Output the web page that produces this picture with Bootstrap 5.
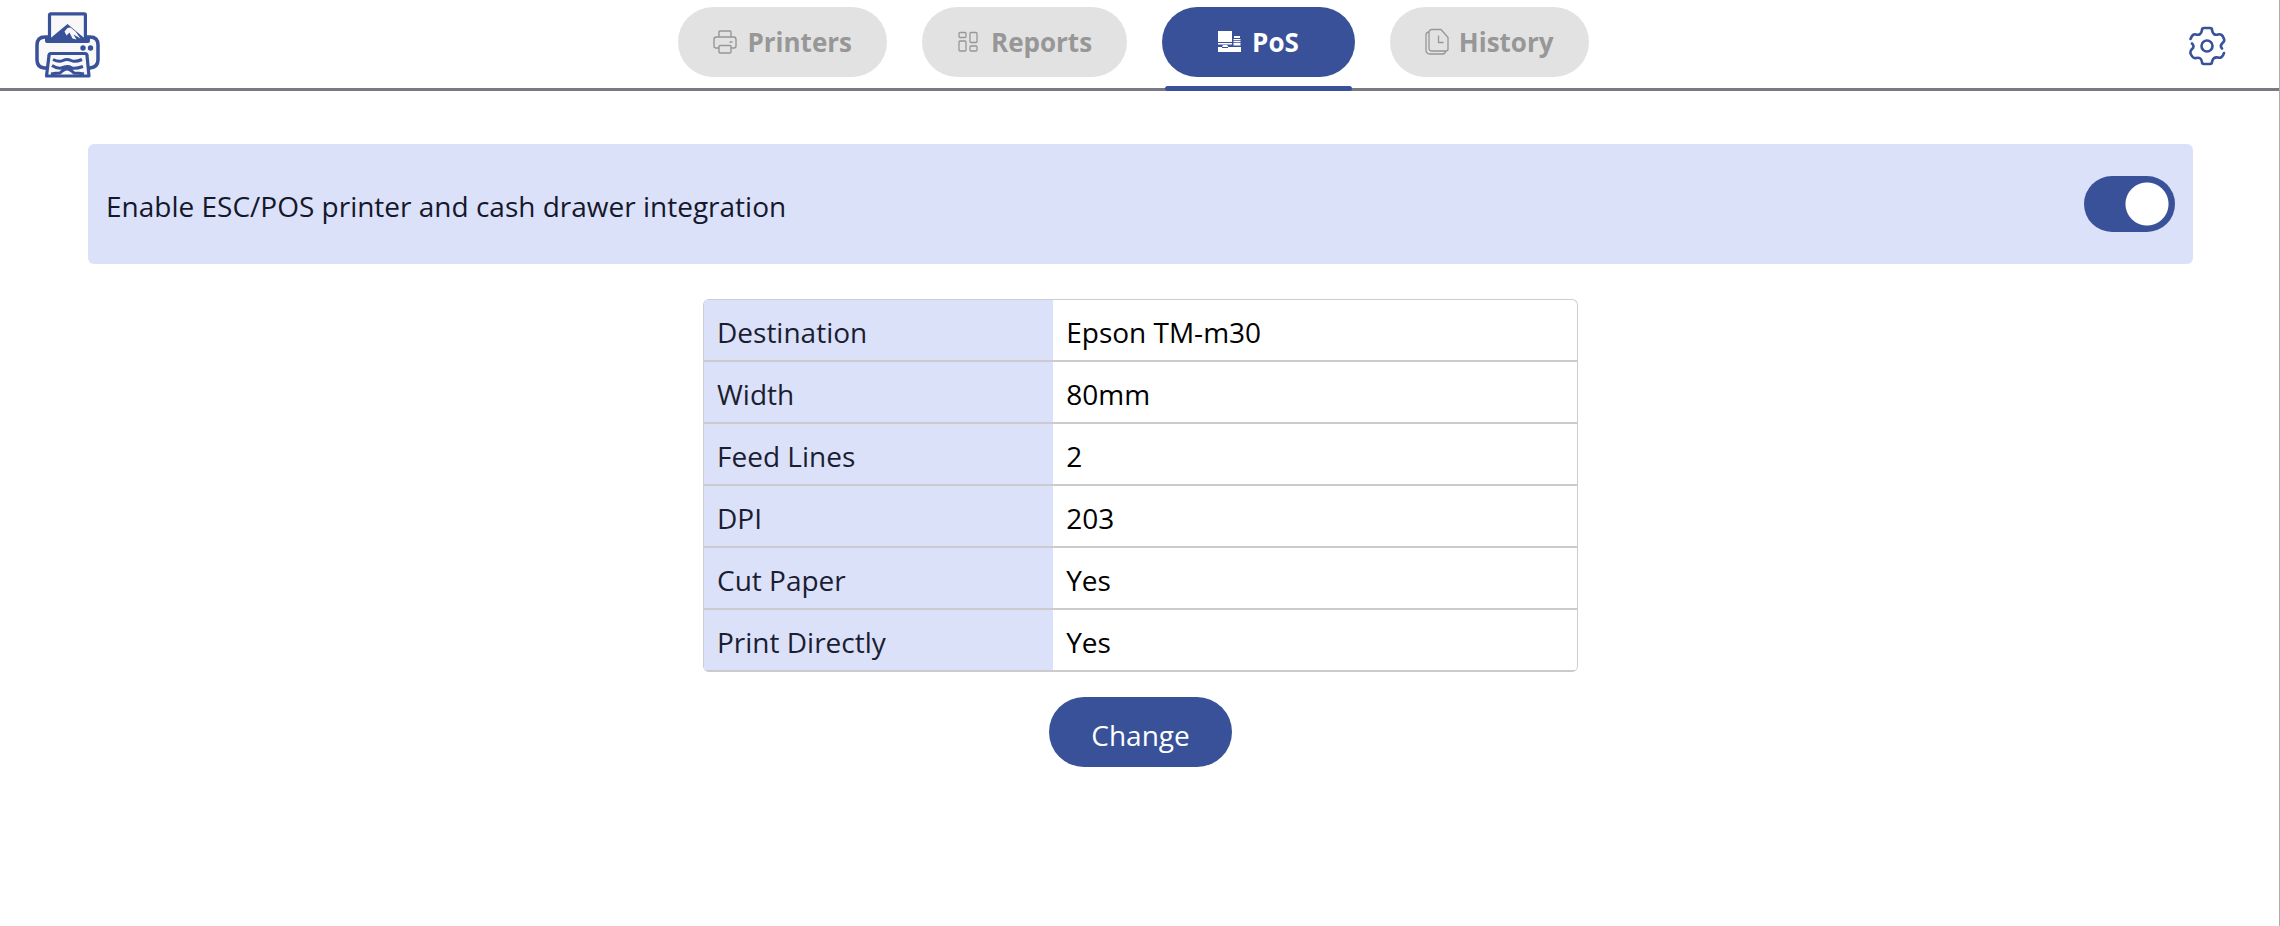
<!DOCTYPE html>
<html lang="en">
<head>
<meta charset="utf-8">
<meta name="viewport" content="width=device-width, initial-scale=1">
<title>PoS</title>
<link href="https://cdn.jsdelivr.net/npm/bootstrap@5.3.0/dist/css/bootstrap.min.css" rel="stylesheet">
<style>
:root { --brand: #385199; --tint: #dce1fa; }
body { font-family: "Open Sans", "Noto Sans", sans-serif; font-size: 28px; line-height: 38px; color: #000; background: #fff; border-right: 1px solid #acacac; }
.topbar { height: 91px; padding: 7px 47px 0 35px; border-bottom: 3px solid #777985; }
.side { flex: 1 1 0; }
.tabs { gap: 35px; }
.tab-link { position: relative; height: 70px; padding: 0 35px; gap: 10px; border-radius: 35px; background: #e2e2e2; color: #979797; font-size: 26px; font-weight: 700; text-decoration: none; }
.tab-link.active { padding: 0 56px; background: var(--brand); color: #fff; }
.tab-link.active::after { content: ""; position: absolute; left: 3px; right: 3px; bottom: -14px; height: 5px; border-radius: 3px; background: var(--brand); }
.gear { padding: 6px; color: var(--brand); background: none; border: 0; line-height: 0; margin-top: 13px; }
main { padding: 53px 86px 0 88px; }
.panel { height: 120px; padding: 0 18px; border-radius: 6px; background: var(--tint); color: #15182b; }
.panel label { padding-top: 4px; }
.form-switch .toggle { width: 91px; height: 56px; margin: 0; border: 0; border-radius: 28px; background-color: #999; background-image: radial-gradient(circle closest-side, #fff 20px, #fff 21px, transparent 22px); background-size: 56px 56px; background-position: left center; }
.form-switch .toggle:checked { background-color: var(--brand); background-image: radial-gradient(circle closest-side, #fff 20px, #fff 21px, transparent 22px); background-position: right center; }
.details { max-width: 875px; margin: 35px auto 25px; border: 1px solid #ccccd4; border-bottom: 0; border-radius: 6px; overflow: hidden; }
.details table { width: 100%; table-layout: fixed; border-collapse: separate; border-spacing: 0; }
.details th, .details td { height: 62px; padding: 3px 13px 0; border-bottom: 2px solid #cbcbcd; }
.details th { width: 40%; font-weight: 400; background: var(--tint); color: #1b1e31; }
.change { height: 70px; padding: 5px 42px 0; border: 0; border-radius: 35px; background: var(--brand); color: #fff; }
</style>
</head>
<body class="min-vh-100">
<header class="topbar d-flex align-items-start">
  <div class="side">
    <a href="#" aria-label="Home" class="d-inline-block lh-1 pt-1">
      <svg width="66" height="68" viewBox="0 0 66 68" class="d-block" fill="none">
        <path d="M10 26Q2 26 2 34v15q0 7 7 8h46q8-1 8-8V34q0-8-8-8z" fill="#f8f8f9" stroke="#385199" stroke-width="3.500"/>
        <path d="M14.500 30V4q0-1.200 1.200-1.200h33.500q1.200 0 1.200 1.200v26z" fill="#f8f8f9" stroke="#385199" stroke-width="3.200"/>
        <path d="M10 25h4.500v3L32.500 13 42 21l8.500 7v-3H55v5q0 2-2 2H12q-2 0-2-2z" fill="#385199"/>
        <path d="M32.500 17l-3 3.500 2 4 3-3 3 6 4 1-3-5 7 4-5-7-5-4z" fill="#f8f8f9"/>
        <circle cx="48" cy="37" r="2.700" fill="#385199"/><circle cx="55.500" cy="37" r="2.700" fill="#385199"/>
        <path d="M16 42.500h34q2 0 2 2L54 65H11.500L14 44.500q0-2 2-2z" fill="#f8f8f9" stroke="#385199" stroke-width="3.200" stroke-linejoin="round"/>
        <path d="M18 48.500q6 3 10 1t8 0 11-1M17 54.500q6 4 11 2t8 0 12-1M16 63q5-1 9-1 4-4 7-4t7 4q5 0 10 1" stroke="#385199" stroke-width="3"/>
      </svg>
    </a>
  </div>
  <nav class="tabs d-flex">
    <a href="#" class="tab-link d-flex align-items-center">
      <svg width="24" height="24" viewBox="0 0 24 24" fill="none" stroke="currentColor" stroke-width="1.400" stroke-linejoin="round" stroke-linecap="round"><path d="M6 7V2q0-1 1-1h10q1 0 1 1v5M6 18H3q-2 0-2-2V9.500Q1 7 3.500 7h17Q23 7 23 9.500V16q0 2-2 2h-3M7 15.500h10q1 0 1 1v5q0 1.500-1 1.500H7q-1 0-1-1.500v-5q0-1 1-1zM17 12h2"/></svg>
      Printers</a>
    <a href="#" class="tab-link d-flex align-items-center">
      <svg width="24" height="24" viewBox="0 0 24 24" fill="none" stroke="currentColor" stroke-width="1.300"><rect x="2" y="2.500" width="7" height="5" rx="1"/><rect x="2" y="11" width="7" height="10" rx="1"/><rect x="13" y="2.500" width="7" height="10" rx="1"/><rect x="13" y="16" width="7" height="5" rx="1"/></svg>
      Reports</a>
    <a href="#" class="tab-link active d-flex align-items-center" aria-current="page">
      <svg width="24" height="24" viewBox="0 0 24 24" fill="currentColor"><path d="M0 1h14v11H0zM0 13h14v1.500H0zM5 15h4l1.500 2H23v5H0v-5h4zM16 6h6v2h-6zM15.500 9h7v1.300h-7zM15.500 11h7v1.300h-7zM15.500 13h7v2.500h-7z"/><path d="M4 17.500h6" stroke="#385199"/></svg>
      PoS</a>
    <a href="#" class="tab-link d-flex align-items-center">
      <svg width="24" height="28" viewBox="0 0 24 28" fill="none" stroke="currentColor" stroke-width="1.300" stroke-linecap="round" stroke-linejoin="round"><path d="M7 1.500h9l7 8V21q0 2-2 2H7q-3 0-3-3V4.500q0-3 3-3zM3.500 4Q1 4.500 1 7v15q0 4 4 4h13q2 0 2.500-2.500M13.500 8v6.500H18"/></svg>
      History</a>
  </nav>
  <div class="side d-flex justify-content-end">
    <button type="button" class="gear" aria-label="Settings">
      <svg width="38" height="40" viewBox="0 0 38 40" fill="none" stroke="currentColor" stroke-width="2.600" stroke-linecap="round" stroke-linejoin="round"><circle cx="19" cy="20" r="5.500"/><path d="M2.500 13Q5 7 8 8.500Q13 10 14 4Q14 2 16 2h6q2 0 2 2 1 6 6 4.500Q34 7 36 13q1 2-1.500 4-3 3-.5 5.500M4 17.500q3 3 0 5.500-2 2-1.500 4.500Q5 33 8 32q5-1.500 6 4 0 2 2 2h6q2 0 2-2 1-5.500 6-4.500 4 1.500 6-4.500"/></svg>
    </button>
  </div>
</header>
<main>
  <section class="panel d-flex align-items-center justify-content-between">
    <label for="escpos">Enable ESC/POS printer and cash drawer integration</label>
    <div class="form-check form-switch p-0 m-0 d-flex"><input class="form-check-input toggle" type="checkbox" role="switch" id="escpos" checked></div>
  </section>
  <div class="details">
    <table>
      <tbody>
        <tr><th scope="row">Destination</th><td>Epson TM-m30</td></tr>
        <tr><th scope="row">Width</th><td>80mm</td></tr>
        <tr><th scope="row">Feed Lines</th><td>2</td></tr>
        <tr><th scope="row">DPI</th><td>203</td></tr>
        <tr><th scope="row">Cut Paper</th><td>Yes</td></tr>
        <tr><th scope="row">Print Directly</th><td>Yes</td></tr>
      </tbody>
    </table>
  </div>
  <div class="text-center"><button type="button" class="change">Change</button></div>
</main>
<script src="https://cdn.jsdelivr.net/npm/bootstrap@5.3.0/dist/js/bootstrap.bundle.min.js"></script>
</body>
</html>
